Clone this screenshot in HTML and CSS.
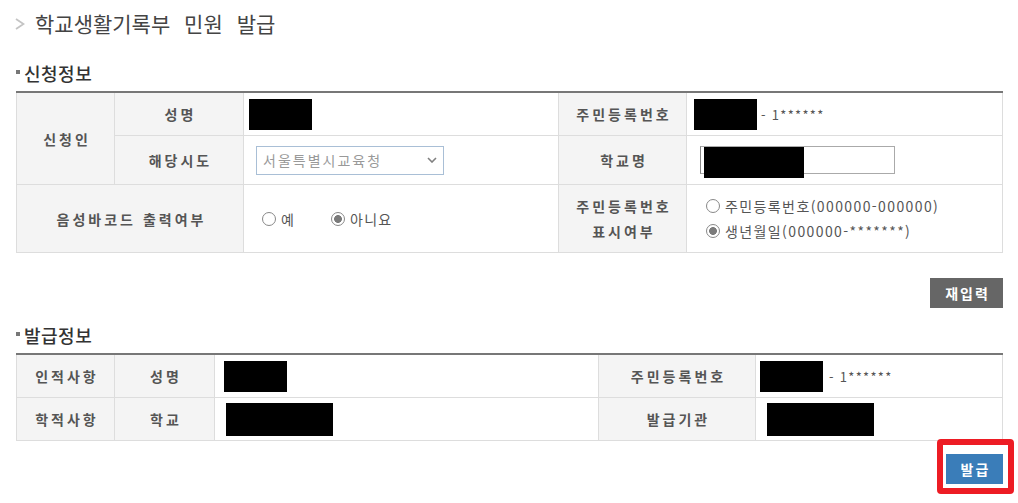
FILE: index.html
```html
<!DOCTYPE html>
<html lang="ko">
<head>
    <meta charset="UTF-8">
    <meta name="viewport" content="width=device-width, initial-scale=1.0">
    <title>학교생활기록부 민원 발급</title>
    <link rel="stylesheet" href="styles.css">
</head>
<body>

    <div class="container">
        <h1 class="page-title">
            <svg class="chevron" width="10" height="12" viewBox="0 0 10 12"><polyline points="1,1 8.5,6 1,11" fill="none" stroke="#c4c4c4" stroke-width="1.8"/></svg>
            학교생활기록부 민원 발급
        </h1>

        <h2 class="sub-title">신청정보</h2>
        <table class="form-table apply-table">
            <colgroup>
                <col class="w98"><col class="w129"><col class="w315"><col class="w128"><col class="w316">
            </colgroup>
            <tr class="row-name">
                <th rowspan="2">신청인</th>
                <th>성명</th>
                <td class="pad5"><span class="redact r-small"></span></td>
                <th>주민등록번호</th>
                <td class="pad7"><span class="redact r-small"></span><span class="masked">- 1******</span></td>
            </tr>
            <tr class="row-region">
                <th>해당시도</th>
                <td class="pad5">
                    <div class="select-box">
                        <span>서울특별시교육청</span>
                        <svg width="10" height="6" viewBox="0 0 10 6"><polyline points="1,1 5,5 9,1" fill="none" stroke="#808080" stroke-width="1.6"/></svg>
                    </div>
                </td>
                <th>학교명</th>
                <td class="pad7">
                    <div class="text-input"><span class="redact r-input"></span></div>
                </td>
            </tr>
            <tr class="row-option">
                <th colspan="2">음성바코드 출력여부</th>
                <td class="pad5">
                    <div class="radio-group inline">
                        <label class="radio-item"><input type="radio" name="voice" class="radio">예</label>
                        <label class="radio-item"><input type="radio" name="voice" class="radio" checked>아니요</label>
                    </div>
                </td>
                <th class="two-line">주민등록번호<br>표시여부</th>
                <td class="pad7">
                    <div class="radio-group stacked">
                        <label class="radio-item"><input type="radio" name="idview" class="radio">주민등록번호(000000-000000)</label>
                        <label class="radio-item"><input type="radio" name="idview" class="radio" checked>생년월일(000000-*******)</label>
                    </div>
                </td>
            </tr>
        </table>

        <div class="btn-row reset-row">
            <button type="button" class="btn btn-gray">재입력</button>
        </div>

        <h2 class="sub-title second">발급정보</h2>
        <table class="form-table issue-table">
            <colgroup>
                <col class="w98"><col class="w100"><col class="w384"><col class="w157"><col class="w247">
            </colgroup>
            <tr>
                <th>인적사항</th>
                <th>성명</th>
                <td class="pad9"><span class="redact r-small"></span></td>
                <th>주민등록번호</th>
                <td class="pad4"><span class="redact r-small"></span><span class="masked wide">- 1******</span></td>
            </tr>
            <tr>
                <th>학적사항</th>
                <th>학교</th>
                <td class="pad11"><span class="redact r-wide"></span></td>
                <th>발급기관</th>
                <td class="pad11"><span class="redact r-wide"></span></td>
            </tr>
        </table>

        <div class="btn-row issue-row">
            <div class="highlight">
                <button type="button" class="btn btn-blue">발급</button>
            </div>
        </div>
    </div>

</body>
</html>
```

FILE: styles.css
```css
html, body {
    min-height: 100%;
}

body {
    margin: 0;
    font-family: "Noto Sans CJK KR", "Noto Sans", sans-serif;
    color: #555;
    background: #fff;
}

.container {
    padding: 11px 15px 20px 16px;
}

/* title */
.page-title {
    margin: 0;
    height: 24px;
    display: flex;
    align-items: center;
    font-size: 21px;
    font-weight: normal;
    color: #444;
    letter-spacing: 0;
    word-spacing: 8px;
}

.chevron {
    margin: 1px 10px 0 -1px;
}

.sub-title {
    margin: 28px 0 8px;
    height: 20px;
    display: flex;
    align-items: center;
    gap: 4px;
    font-size: 18px;
    font-weight: 500;
    letter-spacing: 0.5px;
    color: #333;
}

.sub-title::before {
    content: "";
    width: 4px;
    height: 4px;
    background: #777;
    margin-top: -2px;
}

.sub-title.second {
    margin-top: 17px;
}

/* tables */
.form-table {
    width: 100%;
    border-collapse: collapse;
    table-layout: fixed;
    border-top: 2px solid #777;
}

.w98 { width: 98px; }
.w100 { width: 100px; }
.w128 { width: 128px; }
.w129 { width: 129px; }
.w157 { width: 157px; }
.w247 { width: 247px; }
.w315 { width: 315px; }
.w316 { width: 316px; }
.w384 { width: 384px; }

.form-table th,
.form-table td {
    border: 1px solid #ddd;
    font-size: 13px;
    padding: 0;
}

.form-table th {
    background: #f4f4f4;
    color: #555;
    font-size: 14px;
    font-weight: bold;
    letter-spacing: 3px;
    padding-left: 3px;
    text-align: center;
}

.form-table th.two-line {
    line-height: 25px;
}

.form-table td {
    text-align: left;
}

.pad4 { padding-left: 4px !important; }
.pad5 { padding-left: 5px !important; }
.pad7 { padding-left: 7px !important; }
.pad9 { padding-left: 9px !important; }
.pad11 { padding-left: 11px !important; }

.apply-table .row-name th,
.apply-table .row-name td {
    height: 42px;
}

.apply-table .row-region th,
.apply-table .row-region td {
    height: 48px;
}

.apply-table .row-option th,
.apply-table .row-option td {
    height: 67px;
}

.issue-table th,
.issue-table td {
    height: 42px;
}

.redact {
    display: inline-block;
    vertical-align: middle;
    background: #000;
}

.r-small {
    width: 63px;
    height: 31px;
}

.r-wide {
    width: 107px;
    height: 33px;
}

.masked {
    vertical-align: middle;
    margin-left: 4px;
    font-size: 13px;
    color: #555;
    letter-spacing: 1.3px;
}

.masked.wide {
    margin-left: 6px;
}

.select-box {
    width: 188px;
    height: 29px;
    box-sizing: border-box;
    margin-left: 7px;
    padding: 0 6px 0 6px;
    border: 1px solid #a9bfd6;
    display: flex;
    align-items: center;
    justify-content: space-between;
    font-size: 14px;
    color: #999;
    letter-spacing: 2px;
}

.text-input {
    position: relative;
    width: 195px;
    height: 28px;
    box-sizing: border-box;
    margin-left: 6px;
    border: 1px solid #aaa;
    border-left-color: #888;
    background: #fff;
}

.r-input {
    position: absolute;
    top: 0;
    left: 3px;
    width: 100px;
    height: 31px;
}

/* radios */
.radio-group {
    font-size: 14px;
    color: #555;
    letter-spacing: 1.2px;
}

.radio-group.inline {
    display: flex;
    gap: 36px;
    padding-left: 13px;
}

.radio-group.stacked {
    display: flex;
    flex-direction: column;
    padding-left: 12px;
    line-height: 25px;
    letter-spacing: 1.4px;
}

.radio-item {
    display: inline-flex;
    align-items: center;
    gap: 5px;
}

.radio {
    appearance: none;
    -webkit-appearance: none;
    width: 14px;
    height: 14px;
    margin: 0;
    border: 1px solid #888;
    border-radius: 50%;
    background: #fff;
}

.radio:checked {
    background: radial-gradient(circle, #7b7b7b 0 3.6px, #fff 4.2px);
}

/* buttons */
.btn-row {
    display: flex;
    justify-content: flex-end;
}

.reset-row {
    margin-top: 25px;
}

.issue-row {
    margin-top: 13px;
}

.btn {
    height: 30px;
    border: none;
    color: #fff;
    font-family: inherit;
    font-size: 14px;
    font-weight: bold;
    letter-spacing: 2px;
    padding: 0 0 0 2px;
    cursor: pointer;
}

.btn-gray {
    width: 73px;
    background: #666;
}

.btn-blue {
    width: 57px;
    background: #3a7db9;
}

.highlight {
    position: relative;
    display: flex;
}

.highlight::after {
    content: "";
    position: absolute;
    top: -15px;
    left: -9px;
    right: -11px;
    bottom: -10px;
    border: 6px solid #ed1c24;
    border-radius: 4px;
    pointer-events: none;
}
```
